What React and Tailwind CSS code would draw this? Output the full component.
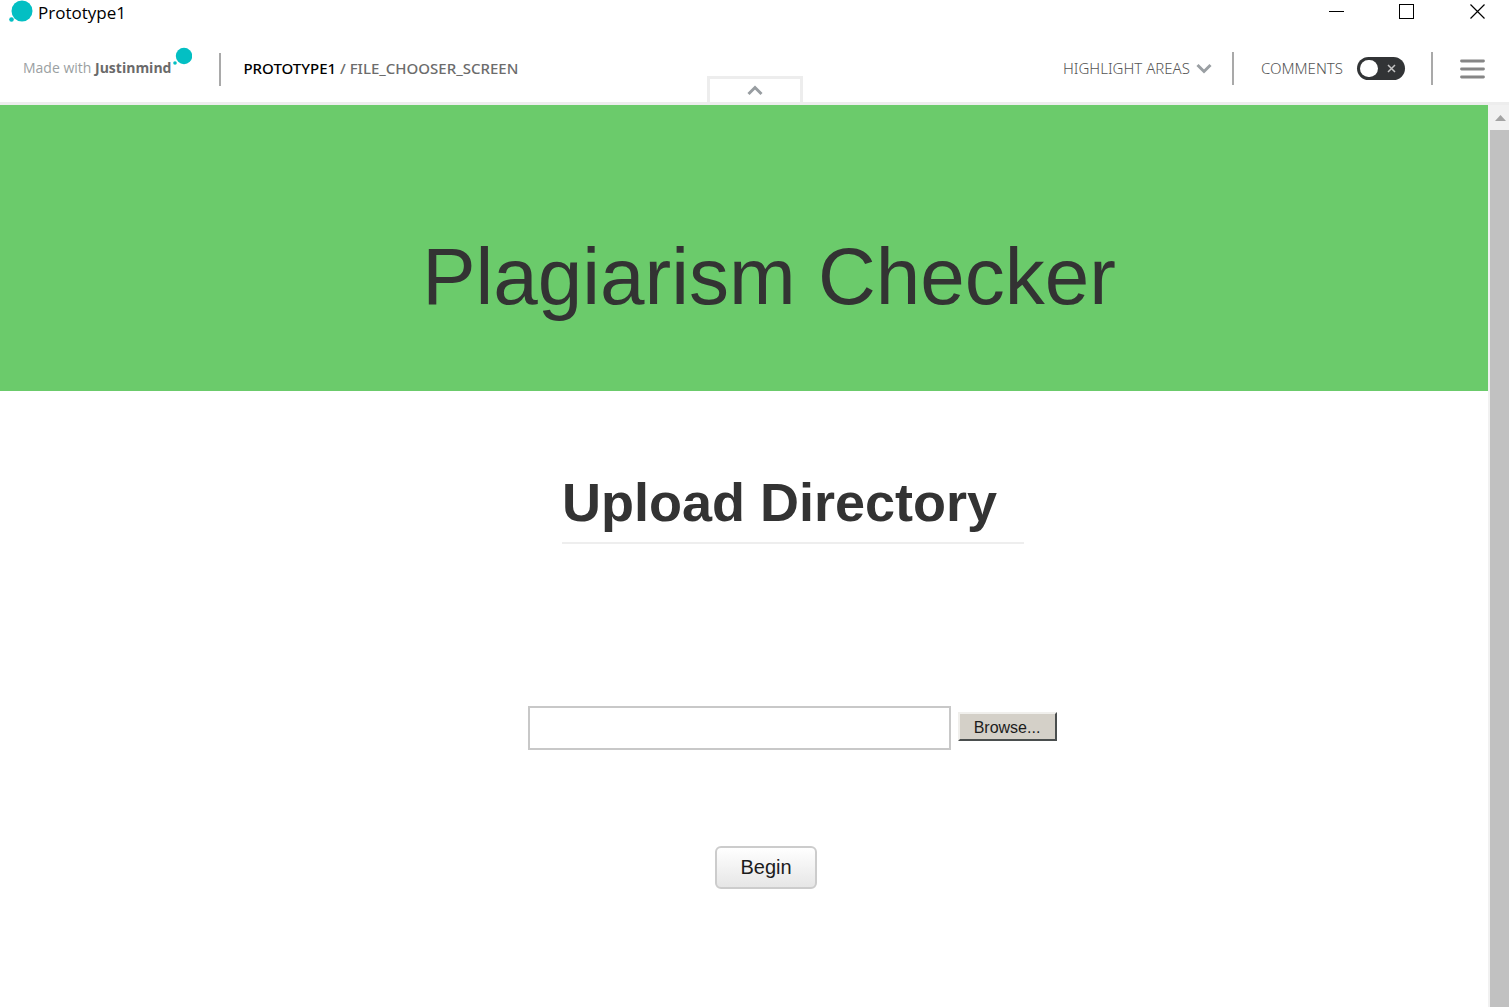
import React from 'react';

function LogoDot({ className }) {
  return (
    <svg className={className} viewBox="0 0 24 24" aria-hidden="true">
      <circle cx="13" cy="11" r="10.5" fill="#03bfc3" />
      <circle cx="2.5" cy="19.5" r="2.3" fill="#03bfc3" />
    </svg>
  );
}

function TitleBar() {
  return (
    <div className="flex h-6 items-center justify-between pl-[9px] pr-[23px]">
      <div className="flex items-center gap-[5px]">
        <LogoDot className="h-6 w-6" />
        <span className="pt-px text-[17px] leading-6 text-black">Prototype1</span>
      </div>
      <div className="flex gap-[55px] text-black">
        <button aria-label="Minimize">
          <svg className="h-4 w-[15px]" viewBox="0 0 15 16" shapeRendering="crispEdges">
            <path d="M0 7.5h15" stroke="currentColor" />
          </svg>
        </button>
        <button aria-label="Maximize">
          <svg className="h-4 w-4" viewBox="0 0 16 16" fill="none" shapeRendering="crispEdges">
            <rect x="0.5" y="0.5" width="14" height="14" stroke="currentColor" />
          </svg>
        </button>
        <button aria-label="Close">
          <svg className="h-4 w-4" viewBox="0 0 16 16" fill="none">
            <path d="M0.5 0.5l14 14M14.5 0.5l-14 14" stroke="currentColor" strokeWidth="1.2" />
          </svg>
        </button>
      </div>
    </div>
  );
}

function Divider() {
  return <div className="h-[33px] w-0.5 bg-[#a9a9a9]" />;
}

function Toolbar() {
  return (
    <header className="relative flex h-[81px] items-center justify-between border-b-3 border-[#ededed] pl-[23px] pr-6 pt-[11px] font-['Noto_Sans','Open_Sans',sans-serif] text-[15px] text-[#6c6c6c]">
      <div className="flex items-center">
        <a href="#" className="flex items-center gap-0.5 pb-0.5 font-['Open_Sans','Noto_Sans',sans-serif] text-sm text-[#9b9fa2]">
          <span>
            Made with <b className="font-bold text-[#6a6a6a]">Justinmind</b>
          </span>
          <svg className="-mt-6 h-[18px] w-[19px]" viewBox="0 0 19 18" aria-hidden="true">
            <circle cx="11" cy="9" r="8.2" fill="#03bfc3" />
            <circle cx="2" cy="16" r="1.8" fill="#03bfc3" />
          </svg>
        </a>
        <div className="ml-[27px] mr-[22px] pt-0.5">
          <Divider />
        </div>
        <nav className="font-medium">
          <a href="#" className="text-black">PROTOTYPE1</a>
          {' / '}
          <a href="#">FILE_CHOOSER_SCREEN</a>
        </nav>
      </div>
      <div className="flex items-center font-light text-[#555555]">
        <button className="flex items-center gap-1.5">
          HIGHLIGHT AREAS
          <svg className="h-4 w-4" viewBox="0 0 16 16" fill="none" aria-hidden="true">
            <path d="M1.5 4L8 10.5L14.5 4" stroke="#9a9fa3" strokeWidth="3" />
          </svg>
        </button>
        <div className="ml-5 mr-[27px]">
          <Divider />
        </div>
        <label htmlFor="comments">COMMENTS</label>
        <div className="relative ml-[14px] flex h-[23px] w-12">
          <input
            id="comments"
            type="checkbox"
            role="switch"
            className="h-full w-full appearance-none rounded-full bg-[#323436]"
          />
          <span className="pointer-events-none absolute left-[3px] top-[3px] h-[17px] w-[18px] rounded-full bg-white" />
          <svg className="pointer-events-none absolute right-[9px] top-[7px] h-[9px] w-[9px]" viewBox="0 0 9 9" aria-hidden="true">
            <path d="M1 1l7 7M8 1l-7 7" stroke="#c4c4c4" strokeWidth="1.5" />
          </svg>
        </div>
        <div className="ml-[26px] mr-[27px]">
          <Divider />
        </div>
        <button aria-label="Menu">
          <svg className="h-5 w-[25px]" viewBox="0 0 25 20" fill="none">
            <path d="M1.5 2h22M1.5 10h22M1.5 18h22" stroke="#868686" strokeWidth="2.8" strokeLinecap="round" />
          </svg>
        </button>
      </div>
      <button
        aria-label="Collapse toolbar"
        className="absolute bottom-0 left-1/2 flex h-[26px] w-24 -translate-x-1/2 items-center justify-center border-3 border-b-0 border-[#ededed] bg-white"
      >
        <svg className="h-4 w-4" viewBox="0 0 16 16" fill="none">
          <path d="M1.5 11L8 4.5L14.5 11" stroke="#989da1" strokeWidth="3" />
        </svg>
      </button>
    </header>
  );
}

function ScrollTrack() {
  return (
    <div className="flex w-[21px] shrink-0 flex-col bg-[#f1f1f1] pl-0.5" aria-hidden="true">
      <div className="flex h-[25px] items-center justify-center pl-0.5">
        <svg className="h-1.5 w-[11px]" viewBox="0 0 11 6">
          <path d="M0 6L5.5 0L11 6z" fill="#a3a3a3" />
        </svg>
      </div>
      <div className="flex-1 bg-[#c1c1c1]" />
    </div>
  );
}

export default function App() {
  return (
    <div className="flex min-h-screen flex-col bg-white font-['Open_Sans','Noto_Sans',sans-serif]">
      <TitleBar />
      <Toolbar />
      <div className="flex flex-1">
        <main className="flex flex-1 flex-col items-center font-['Liberation_Sans',Arial,sans-serif] text-[#333333]">
          <div className="flex h-[286px] w-full items-center justify-center bg-[#6bcb6b] pl-[50px] pt-[58px]">
            <h1 className="text-[80px] leading-[92px]">Plagiarism Checker</h1>
          </div>
          <div className="flex w-full flex-col items-center pl-[98px] pt-20">
            <h2 className="w-[462px] border-b-2 border-[#eeeeee] pb-[9px] text-[54px] font-bold leading-[62px]">
              Upload Directory
            </h2>
            <form className="mt-[162px] flex items-center gap-[7px] pr-0.5">
              <input
                type="text"
                aria-label="Directory path"
                className="h-11 w-[423px] border-2 border-[#c8c8c8] bg-white px-2 text-base"
              />
              <button
                type="button"
                className="mb-1 h-[29px] w-[99px] border-2 border-b-[#4a4e4e] border-l-[#f0efec] border-r-[#4a4e4e] border-t-[#f0efec] bg-[#d4d0c8] pt-0.5 text-base leading-6 text-[#1c1c1c]"
              >
                Browse...
              </button>
            </form>
          </div>
          <div className="flex w-full justify-center pl-11 pt-24">
            <button className="h-[43px] w-[102px] rounded-md border-2 border-[#cccccc] bg-linear-to-b from-white to-[#e6e6e6] pb-0.5 text-xl leading-6 text-[#1c1c1c]">
              Begin
            </button>
          </div>
        </main>
        <ScrollTrack />
      </div>
    </div>
  );
}
